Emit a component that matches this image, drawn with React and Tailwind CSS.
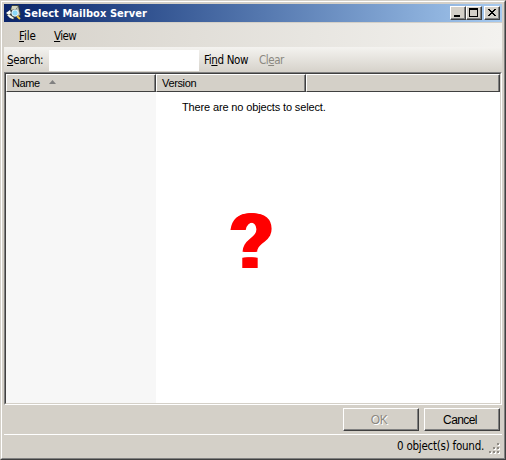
import React from "react";

const tahoma = "font-['DejaVu_Sans_Condensed','DejaVu_Sans',sans-serif] font-stretch-condensed";
const sans = "font-['Liberation_Sans',sans-serif]";
const raised =
  "border border-t-white border-l-white border-r-[#404040] border-b-[#404040] shadow-[inset_-1px_-1px_0_#808080] bg-[#d4d0c8]";

function AppIcon() {
  return (
    <svg width="16" height="16" viewBox="0 0 16 16" className="shrink-0">
      <path d="M4 5 6 0H13L15 10 11 13Z" fill="#39413f" />
      <path d="M6 1H12L10 4 5 5Z" fill="#d3d4bc" />
      <path d="M12 1 14 10 12 11 10 5Z" fill="#b9bbb2" />
      <path d="M0 9 5 4 6 9 9 12 8 15 4 13Z" fill="#39413f" />
      <path d="M0 8 4 5 5 8 3 10Z" fill="#fbfdf8" />
      <path d="M1 10 4 10 8 13 7 14 4 13Z" fill="#f3f6ee" />
      <circle cx="9" cy="8" r="3.2" fill="#8bd8f8" stroke="#effafd" />
      <path d="m11 11 3 3" stroke="#f0c844" strokeWidth="2" />
    </svg>
  );
}

function CaptionButton({ children, className = "" }) {
  return (
    <button className={`h-[14px] w-4 ${raised} ${className}`}>
      <svg width="14" height="12" viewBox="0 0 14 12" shapeRendering="crispEdges" className="block">
        {children}
      </svg>
    </button>
  );
}

function Column({ children, className = "" }) {
  return (
    <div
      className={`flex h-[18px] items-center border border-t-white border-l-white border-r-[#404040] border-b-[#404040] bg-[#d4d0c8] pl-[5px] shadow-[inset_-1px_0_0_#808080] ${className}`}
    >
      {children}
    </div>
  );
}

const gripDots = [[8, 0], [4, 4], [8, 4], [0, 8], [4, 8], [8, 8]];

export default function App() {
  return (
    <div className={`flex h-[460px] w-[506px] flex-col overflow-hidden border border-t-[#d4d0c8] border-l-[#d4d0c8] border-r-[#404040] border-b-[#404040] bg-[#d4d0c8] text-[11px] leading-[14px] text-black ${sans}`}>
      <div className="flex min-h-0 flex-1 flex-col border border-t-white border-l-white border-r-[#808080] border-b-[#808080] p-[2px]">
        <header className="flex h-[18px] shrink-0 items-center bg-linear-to-r from-[#0a246a] to-[#a6caf0] pr-[2px] pl-[2px]">
          <AppIcon />
          <h1 className={`ml-[2px] pt-[2px] text-[11px] font-bold tracking-[0.06px] whitespace-nowrap text-white ${tahoma}`}>
            Select Mailbox Server
          </h1>
          <div className="ml-auto flex">
            <CaptionButton>
              <path d="M3 8h6v2H3z" />
            </CaptionButton>
            <CaptionButton>
              <path fillRule="evenodd" d="M2 1h9v9H2zM3 3v6h7V3z" />
            </CaptionButton>
            <CaptionButton className="ml-[2px]">
              <path d="M3 2h2v1h1v1h2V3h1V2h2v1h-1v1H9v1H8v1h1v1h1v1h1v1H9V8H8V7H6v1H5v1H3V8h1V7h1V6h1V5H5V4H4V3H3z" />
            </CaptionButton>
          </div>
        </header>

        <nav className={`mt-px flex h-6 shrink-0 items-center bg-linear-to-r from-[#d6d2ca] to-[#f3f2ef] pt-[2px] pl-[15px] text-[11.5px] ${tahoma}`}>
          <span className="w-[35px] tracking-[-0.1px]"><u>F</u>ile</span>
          <span className="tracking-[-0.6px]"><u>V</u>iew</span>
        </nav>

        <div className={`flex h-[25px] shrink-0 items-center bg-linear-to-b from-[#f4f3f0] to-[#d6d2ca] pl-[3px] text-[11.5px] ${tahoma}`}>
          <label className="w-[42px] tracking-[-0.4px]"><u>S</u>earch:</label>
          <div className="mt-px h-[21px] w-[150px] bg-white" />
          <span className="ml-[5px] w-[55px] tracking-[-0.35px] whitespace-nowrap">Fi<u>n</u>d Now</span>
          <span className="tracking-[-0.45px] text-[#8b8881]">Cl<u>e</u>ar</span>
        </div>

        <main className="h-[333px] shrink-0 border border-t-[#808080] border-l-[#808080] border-r-white border-b-white">
          <div className="flex h-full flex-col border border-t-[#404040] border-l-[#404040] border-r-[#d4d0c8] border-b-[#d4d0c8] bg-white">
            <div className="flex shrink-0">
              <Column className="w-[150px]">
                <span className="tracking-[-0.4px]">Name</span>
                <svg width="7" height="4" viewBox="0 0 7 4" className="mb-[2px] ml-[9px]">
                  <path d="M3.5 0 7 4H0z" fill="#808080" />
                </svg>
              </Column>
              <Column className="w-[150px]"><span className="tracking-[-0.35px]">Version</span></Column>
              <Column className="flex-1" />
            </div>
            <div className="flex min-h-0 flex-1">
              <div className="w-[150px] bg-[#f7f7f7]" />
              <div className="flex-1 pt-[8px] pl-[26px]">
                <p className="tracking-[-0.14px] whitespace-nowrap">There are no objects to select.</p>
                <div className="mt-[88px] ml-[48px] h-[78px] w-[46px] origin-left scale-x-90 text-[78px] leading-[78px] font-bold text-[#ff0000] [text-shadow:1px_0_#f00,-1px_0_#f00,2px_0_#f00,-2px_0_#f00,-3px_0_#f00,3px_0_#f00]">
                  ?
                </div>
              </div>
            </div>
          </div>
        </main>

        <footer className="flex min-h-0 flex-1 flex-col">
          <div className="flex h-[30px] shrink-0 justify-end gap-[5px] border-b border-white pt-[3px] pr-[2px]">
            <button className={`h-[23px] w-[76px] pr-[4px] text-[12px] tracking-[-0.4px] text-[#8b8881] [text-shadow:1px_1px_white] ${raised}`}>OK</button>
            <button className={`h-[23px] w-[76px] pr-[4px] text-[12px] tracking-[-0.6px] ${raised}`}>Cancel</button>
          </div>
          <div className={`flex flex-1 items-center justify-end pr-[2px] text-[11.5px] ${tahoma}`}>
            <span className="tracking-[-0.25px] whitespace-nowrap">0 object(s) found.</span>
            <svg width="11" height="11" viewBox="0 0 11 11" shapeRendering="crispEdges" className="mt-[5px] ml-[5px]">
              {gripDots.map(([x, y]) => (
                <g key={`${x}-${y}`}>
                  <rect x={x + 1} y={y + 1} width="2" height="2" fill="white" />
                  <rect x={x} y={y} width="2" height="2" fill="#8f8b84" />
                </g>
              ))}
            </svg>
          </div>
        </footer>
      </div>
    </div>
  );
}
